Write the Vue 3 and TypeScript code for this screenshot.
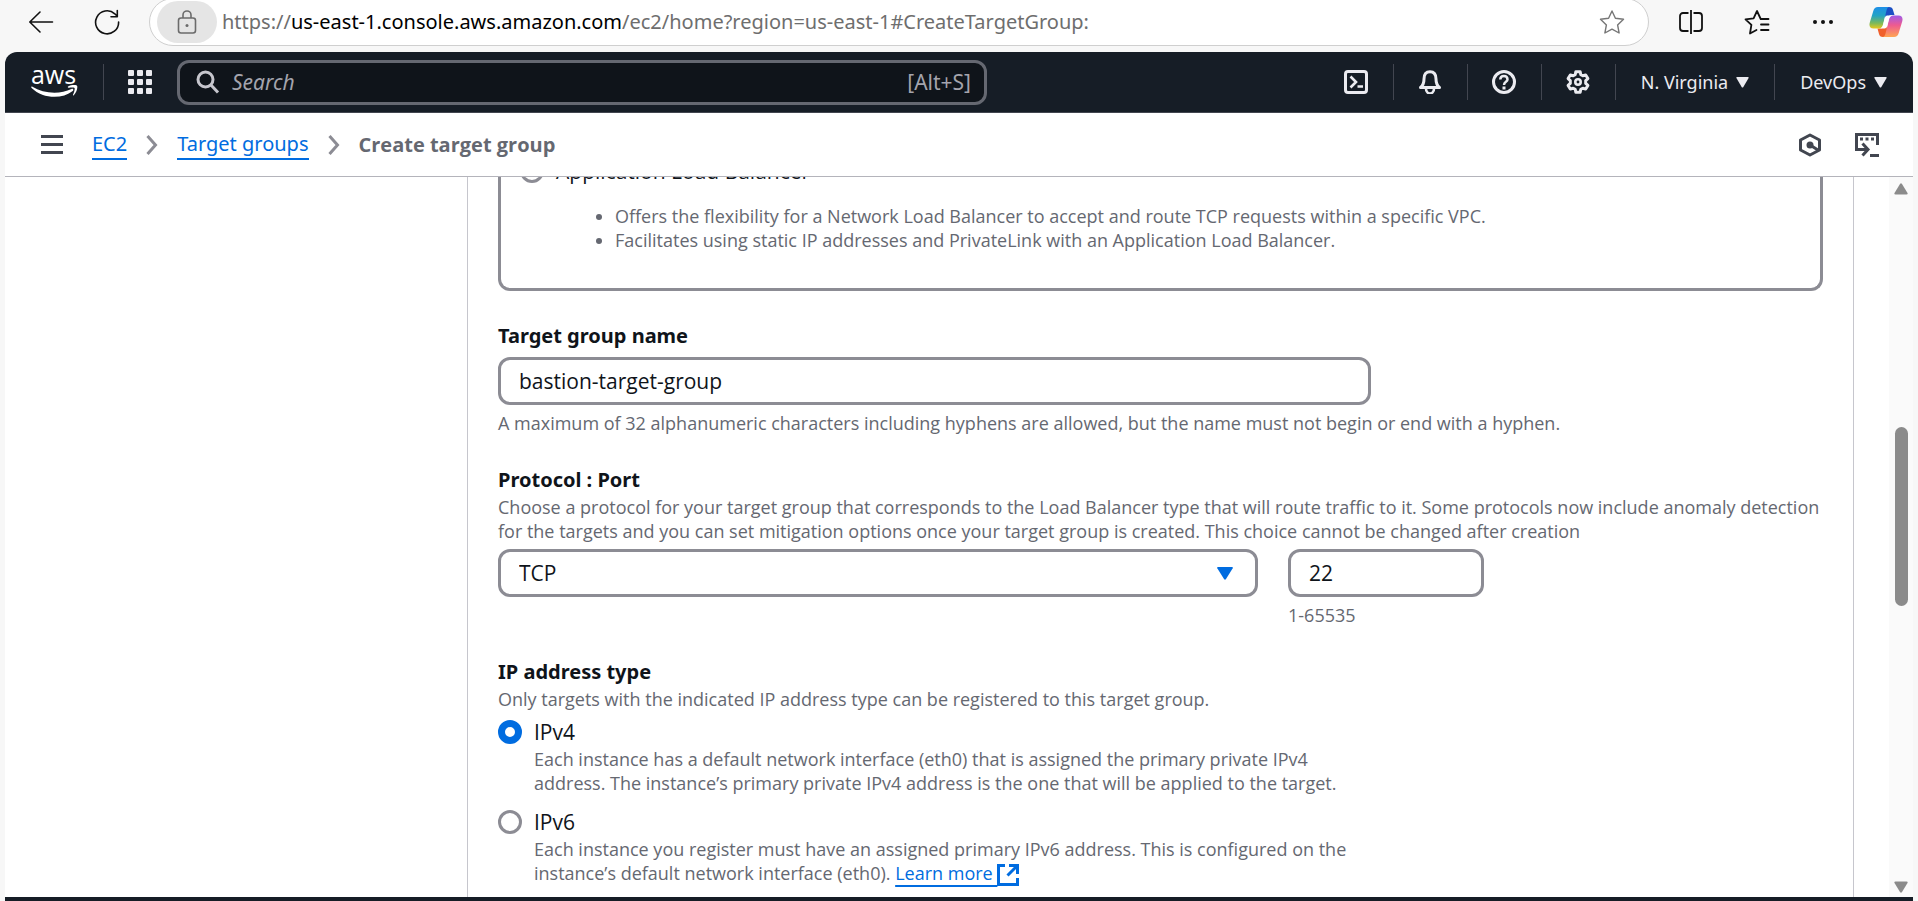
<script setup lang="ts">
import { ref } from 'vue'

interface IpOption {
  id: string
  label: string
  text: string
  link?: string
}

const groupName = ref('bastion-target-group')
const protocol = ref('TCP')
const port = ref('22')
const ipType = ref('ipv4')
const targetType = ref('')
const query = ref('')

const albPoints: string[] = [
  'Offers the flexibility for a Network Load Balancer to accept and route TCP requests within a specific VPC.',
  'Facilitates using static IP addresses and PrivateLink with an Application Load Balancer.',
]

const ipOptions: IpOption[] = [
  {
    id: 'ipv4',
    label: 'IPv4',
    text: 'Each instance has a default network interface (eth0) that is assigned the primary private IPv4 address. The instance’s primary private IPv4 address is the one that will be applied to the target.',
  },
  {
    id: 'ipv6',
    label: 'IPv6',
    text: 'Each instance you register must have an assigned primary IPv6 address. This is configured on the instance’s default network interface (eth0).',
    link: 'Learn more',
  },
]
</script>

<template>
  <div class="window">
    <div class="browser-bar">
      <button class="tool back" aria-label="Back">
        <svg width="26" height="26" viewBox="0 0 26 26" fill="none" stroke="#111" stroke-width="1.6" stroke-linecap="round" stroke-linejoin="round"><path d="M24.500 13H2M12 3 1.800 13 12 23" /></svg>
      </button>
      <button class="tool reload" aria-label="Reload">
        <svg width="26" height="26" viewBox="0 0 26 26" fill="none" stroke="#111" stroke-width="1.6" stroke-linecap="round" stroke-linejoin="round"><path d="M24.600 13A11.500 11.500 0 1 1 20.800 4.800L23 7M23.300 1.500V7.800H17" /></svg>
      </button>
      <div class="address">
        <button class="site-info" aria-label="Site information">
          <svg width="22" height="26" viewBox="0 0 22 26" fill="none" stroke="#6b6b6b" stroke-width="1.6"><rect x="2.500" y="9" width="17" height="15" rx="2.500" /><path d="M7 9V6a4 4 0 0 1 8 0v3" /><circle cx="11" cy="16.500" r="1.500" fill="#6b6b6b" stroke="none" /></svg>
        </button>
        <span class="url">https://<b>us-east-1.console.aws.amazon.com</b>/ec2/home?region=us-east-1#CreateTargetGroup:</span>
        <button class="tool" aria-label="Add to favorites">
          <svg width="26" height="26" viewBox="0 0 26 26" fill="none" stroke="#767676" stroke-width="1.4" stroke-linejoin="round"><path d="M13 2 16.400 9.300 24.500 10.300 18.600 15.900 20.100 24 13 20.100 5.900 24 7.400 15.900 1.500 10.300 9.600 9.300Z" /></svg>
        </button>
      </div>
      <div class="browser-tools">
        <button class="tool" aria-label="Split screen">
          <svg width="26" height="26" viewBox="0 0 26 26" fill="none" stroke="#111" stroke-width="1.8"><path d="M13 1v24M10.500 4H5a3 3 0 0 0-3 3v12a3 3 0 0 0 3 3h5.500M15.500 4H21a3 3 0 0 1 3 3v12a3 3 0 0 1-3 3h-5.500" /></svg>
        </button>
        <button class="tool" aria-label="Favorites">
          <svg width="26" height="26" viewBox="0 0 26 26" fill="none" stroke="#111" stroke-width="1.8" stroke-linejoin="round" stroke-linecap="round"><path d="M24.500 10H16.700L13 2 9.600 9.300 1.500 10.300 7.400 15.900 6 24.500 12.500 21M17 15.500h7.500M17 21h7.500" /></svg>
        </button>
        <button class="tool" aria-label="Settings and more">
          <svg width="26" height="26" viewBox="0 0 26 26" fill="#111"><circle cx="5" cy="13" r="2" /><circle cx="13" cy="13" r="2" /><circle cx="21" cy="13" r="2" /></svg>
        </button>
        <button class="tool copilot" aria-label="Copilot">
          <svg width="34" height="32" viewBox="0 0 34 32">
            <defs>
              <linearGradient id="cpA" x1="0" y1="0" x2="0" y2="1"><stop offset="0" stop-color="#1e8fe8" /><stop offset=".4" stop-color="#23a3c4" /><stop offset=".75" stop-color="#7cb95a" /><stop offset="1" stop-color="#e8c81c" /></linearGradient>
              <linearGradient id="cpB" x1="0" y1="0" x2="0" y2="1"><stop offset="0" stop-color="#a05be8" /><stop offset=".45" stop-color="#ee5a90" /><stop offset="1" stop-color="#ffa552" /></linearGradient>
            </defs>
            <path d="M15 1h5c2.500 0 3.500 1 4 3l1.500 5h-3c-2 0-3 1-3.500 3l-2 4Z" fill="#1b4fc4" />
            <path d="M19 31h-5c-2.500 0-3.500-1-4-3l-1.500-5.500h3c2 0 3-1 3.500-3l2-4Z" fill="#f0602c" />
            <path d="M9 1H20.500c-1.700 0-2.500 1.500-3 3.500L14 18.500c-.6 2.500-2 4-4.500 4H4.500C1 22.500-.2 20 .8 16.500L4.300 5C5 2.300 6.500 1 9 1Z" fill="url(#cpA)" />
            <path d="M25 31H13.500c1.700 0 2.500-1.500 3-3.500L20 13.500c.6-2.500 2-4 4.500-4h5c3.500 0 4.700 2.500 3.700 6L29.700 27c-.7 2.700-2.200 4-4.700 4Z" fill="url(#cpB)" />
            <path d="M18.200 9.500h5c-2 .6-2.900 2-3.400 4l-1.600 6.500c-.5 1.600-1.200 2.500-2.700 2.500h-4.200c1.600-.6 2.400-2 2.900-4l1.500-6c.4-1.700 1.200-2.700 2.500-3Z" fill="#fff" />
          </svg>
        </button>
      </div>
    </div>

    <div class="page">
      <header class="aws-nav">
        <a class="logo" href="#" aria-label="AWS home">
          <span class="logo-word">aws</span>
          <svg width="48" height="13" viewBox="0 0 48 13" fill="#fff"><path d="M1 1.500C13 9 29 9.500 40.500 4c1.500-.6 2.500 1 1.200 2C31 14.500 12 14 .6 3 0 2.200.2 1 1 1.500Z" /><path d="M37 1.500c3-2 8-2 9-.8s-.3 7-3.200 9.600c-.6.5-1 .1-.8-.5.800-2 2.200-5.800 1.500-6.700S39 2.700 37.500 2.800c-.7 0-.9-.7-.5-1.300Z" /></svg>
        </a>
        <button class="apps" aria-label="Services">
          <svg width="24" height="24" viewBox="0 0 24 24" fill="#ebebf0"><rect v-for="n in 9" :key="n" :x="((n - 1) % 3) * 9" :y="Math.floor((n - 1) / 3) * 9" width="6" height="6" rx="1" /></svg>
        </button>
        <label class="search">
          <svg width="24" height="24" viewBox="0 0 24 24" fill="none" stroke="#c6c6cd" stroke-width="3"><circle cx="9.500" cy="9.500" r="7.500" /><path d="m15 15 7 7.500" /></svg>
          <input v-model="query" type="text" placeholder="Search" aria-label="Search" />
          <span>[Alt+S]</span>
        </label>
        <nav class="nav-tools">
          <button class="nav-icon" aria-label="CloudShell">
            <svg width="24" height="24" viewBox="0 0 24 24" fill="none" stroke="#ebebf0" stroke-width="3"><rect x="1.500" y="1.500" width="21" height="21" rx="2.500" /><path d="m6.500 6.500 5.500 5.500-5.500 5.500M13.500 16.500H19" stroke-width="2.600" /></svg>
          </button>
          <button class="nav-icon" aria-label="Notifications">
            <svg width="24" height="24" viewBox="0 0 24 24" fill="none" stroke="#ebebf0" stroke-width="3" stroke-linejoin="round"><path d="M2.500 17.500c2-1.500 3.500-3.500 3.500-8.500 0-4.700 2-7.300 6-7.300S18 4.300 18 9c0 5 1.500 7 3.500 8.500Z" /><path d="M8 18.500a4 5 0 0 0 8 0" stroke-width="2.600" /></svg>
          </button>
          <button class="nav-icon" aria-label="Help">
            <svg width="24" height="24" viewBox="0 0 24 24" fill="none" stroke="#ebebf0" stroke-width="3"><circle cx="12" cy="12" r="10.500" /><path d="M8.300 9.500c0-4.700 7.200-4.700 7.200 0 0 2.500-3.500 2.300-3.500 5.500" stroke-width="2.500" /><path d="M12 16.500v3" /></svg>
          </button>
          <button class="nav-icon" aria-label="Settings">
            <svg width="24" height="24" viewBox="0 0 24 24" fill="none" stroke="#ebebf0" stroke-width="3" stroke-linejoin="round"><path d="M9.800 1.800h4.400l.6 2.900 2 1.100 2.900-.9 2.200 3.700-2.200 2v2.800l2.200 2-2.200 3.700-2.900-.9-2 1.100-.6 2.900H9.800l-.6-2.900-2-1.100-2.900.9-2.200-3.700 2.200-2v-2.800l-2.200-2 2.200-3.700 2.900.9 2-1.100Z" /><circle cx="12" cy="12" r="2.700" stroke-width="2.600" /></svg>
          </button>
          <button class="nav-text">N. Virginia <svg width="13" height="11" viewBox="0 0 13 11" fill="#ebebf0"><path d="M1 0h11q1 0 .6 1L7.200 10.200q-.7.800-1.400 0L.4 1Q0 0 1 0Z" /></svg></button>
          <button class="nav-text">DevOps <svg width="13" height="11" viewBox="0 0 13 11" fill="#ebebf0"><path d="M1 0h11q1 0 .6 1L7.200 10.200q-.7.800-1.400 0L.4 1Q0 0 1 0Z" /></svg></button>
        </nav>
      </header>

      <div class="crumb-bar">
        <button class="menu" aria-label="Open navigation">
          <svg width="22" height="20" viewBox="0 0 22 20" fill="#424650"><path d="M0 0h22v3H0zM0 8h22v3H0zM0 16h22v3H0z" /></svg>
        </button>
        <nav class="crumbs" aria-label="Breadcrumbs">
          <a href="#">EC2</a>
          <svg width="12" height="20" viewBox="0 0 12 20" fill="none" stroke="#8c8c94" stroke-width="3"><path d="m1.500 1 8 9-8 9" /></svg>
          <a href="#">Target groups</a>
          <svg width="12" height="20" viewBox="0 0 12 20" fill="none" stroke="#8c8c94" stroke-width="3"><path d="m1.500 1 8 9-8 9" /></svg>
          <strong>Create target group</strong>
        </nav>
        <button class="side-tool" aria-label="Info">
          <svg width="24" height="24" viewBox="0 0 24 24" fill="none" stroke="#424650" stroke-width="3"><path d="M12 2 21.500 7v10L12 22 2.500 17V7Z" stroke-linejoin="round" /><circle cx="12" cy="12" r="3.500" fill="#424650" stroke="none" /><path d="m12 12 8 5" /></svg>
        </button>
        <button class="side-tool" aria-label="Console tools">
          <svg width="24" height="24" viewBox="0 0 24 24" fill="none" stroke="#424650" stroke-width="3"><path d="M22.500 12V1.500h-21v15H12" /><path d="M7.500 10.500 13 16.500l-5.500 6M15 22.500h9" /><path d="M5 6h3M10.500 6h3M16 6h3" /></svg>
        </button>
      </div>

      <div class="content">
        <main class="panel">
          <section class="type-card">
            <label class="radio-row"><input v-model="targetType" type="radio" name="target-type" value="alb" /><span>Application Load Balancer</span></label>
            <ul>
              <li v-for="point in albPoints" :key="point">{{ point }}</li>
            </ul>
          </section>

          <section class="field">
            <label class="title" for="group-name">Target group name</label>
            <input id="group-name" v-model="groupName" class="box name-box" type="text" />
            <p class="hint">A maximum of 32 alphanumeric characters including hyphens are allowed, but the name must not begin or end with a hyphen.</p>
          </section>

          <section class="field">
            <label class="title" for="protocol">Protocol : Port</label>
            <p class="hint lead">Choose a protocol for your target group that corresponds to the Load Balancer type that will route traffic to it. Some protocols now include anomaly detection for the targets and you can set mitigation options once your target group is created. This choice cannot be changed after creation</p>
            <div class="pair">
              <div class="select-wrap">
                <select id="protocol" v-model="protocol" class="box"><option>TCP</option></select>
                <svg width="16" height="13" viewBox="0 0 16 13" fill="#006ce0"><path d="M1 0h14q1.300 0 .7 1.200L9 12q-1 1.500-2 0L.3 1.200Q-.3 0 1 0Z" /></svg>
              </div>
              <div class="port">
                <input v-model="port" class="box" type="text" aria-label="Port" />
                <p class="hint">1-65535</p>
              </div>
            </div>
          </section>

          <section class="field" role="radiogroup" aria-labelledby="ip-title">
            <h2 id="ip-title" class="title">IP address type</h2>
            <p class="hint lead">Only targets with the indicated IP address type can be registered to this target group.</p>
            <div v-for="option in ipOptions" :key="option.id" class="option">
              <label class="radio-row"><input v-model="ipType" type="radio" name="ip-type" :value="option.id" /><span>{{ option.label }}</span></label>
              <p class="hint">{{ option.text }}<template v-if="option.link">{{ ' ' }}<a class="more" href="#">{{ option.link }} <svg width="22" height="22" viewBox="0 0 22 22" fill="none" stroke="#006ce0" stroke-width="3"><path d="M8 1.500H1.500v19h19V14M12 1.500h8.500V10M20 2l-9.500 9.500" /></svg></a></template></p>
            </div>
          </section>
        </main>
        <div class="scrollbar" aria-hidden="true">
          <svg width="14" height="12" viewBox="0 0 14 12" fill="#8b8b8b"><path d="M6 1q1-1.500 2 0l5.500 9q.6 1.500-1 1.500h-11q-1.600 0-1-1.500Z" /></svg>
          <div class="track"><div class="thumb"></div></div>
          <svg width="14" height="12" viewBox="0 0 14 12" fill="#8b8b8b"><path d="M6 11q1 1.500 2 0l5.500-9q.6-1.500-1-1.500h-11q-1.600 0-1 1.500Z" /></svg>
        </div>
      </div>
      <footer class="foot"></footer>
    </div>
  </div>
</template>

<style>
body {
  margin: 0;
  overflow: hidden;
}
</style>

<style scoped>
* {
  box-sizing: border-box;
}
.window {
  height: 100vh;
  display: flex;
  flex-direction: column;
  overflow: hidden;
  background: #f7f7f7;
  font-family: 'Noto Sans', 'Open Sans', sans-serif;
  font-size: 20px;
  line-height: 30px;
  color: #0f141a;
}
button {
  border: 0;
  padding: 0;
  background: none;
  font: inherit;
  color: inherit;
}
svg {
  display: block;
  flex: none;
}
p,
h2,
ul {
  margin: 0;
}

.browser-bar {
  flex: none;
  display: flex;
  align-items: center;
  height: 52px;
  padding: 0 15px 8px 28px;
}
.reload {
  margin: 0 29px 0 40px;
}
.address {
  flex: 1;
  display: flex;
  align-items: center;
  height: 48px;
  padding: 0 23px 0 7px;
  background: #fff;
  border: 1px solid #cfcfcf;
  border-radius: 24px;
}
.site-info {
  display: flex;
  align-items: center;
  justify-content: center;
  width: 60px;
  height: 42px;
  border-radius: 21px;
  background: #e5e5e5;
}
.url {
  flex: 1;
  margin-left: 5px;
  color: #6e6e6e;
  white-space: nowrap;
}
.url b {
  font-weight: 400;
  color: #000;
}
.browser-tools {
  display: flex;
  align-items: center;
  gap: 40px;
  margin-left: 29px;
}
.copilot {
  margin-left: -7px;
}

.page {
  flex: 1;
  min-height: 0;
  display: flex;
  flex-direction: column;
  margin: 0 5px;
  border-radius: 12px 12px 0 0;
  overflow: hidden;
  background: #fff;
}
.aws-nav {
  flex: none;
  display: flex;
  align-items: center;
  height: 61px;
  border-bottom: 1px solid #424650;
  background: #161d26;
  color: #ebebf0;
}
.logo {
  flex: none;
  display: flex;
  flex-direction: column;
  align-items: center;
  width: 99px;
  height: 36px;
  padding: 0 19px 0 18px;
  border-right: 1px solid #424650;
  color: #fff;
  text-decoration: none;
}
.logo svg {
  margin-left: 2px;
}
.logo-word {
  font: 500 25px/21px 'Open Sans', sans-serif;
}
.apps {
  margin: 0 25px 0 24px;
}
.search {
  display: flex;
  align-items: center;
  width: 810px;
  height: 45px;
  padding: 0 13px 0 16px;
  border: 3px solid #656871;
  border-radius: 12px;
  background: #0f141a;
  font-size: 21px;
  color: #a4a4ad;
}
.search input {
  flex: 1;
  min-width: 0;
  padding: 0;
  margin-left: 12px;
  border: 0;
  outline: 0;
  background: none;
  font: inherit;
  color: inherit;
}
.search input::placeholder {
  font-style: italic;
  color: #a4a4ad;
  opacity: 1;
}
.nav-tools {
  display: flex;
  align-items: center;
  margin-left: auto;
  margin-right: 1px;
  font-size: 18px;
}
.nav-icon,
.nav-text {
  display: flex;
  align-items: center;
  justify-content: center;
  height: 36px;
  white-space: nowrap;
}
.nav-icon {
  width: 74px;
}
.nav-tools > * + * {
  border-left: 1px solid #424650;
}
.nav-text {
  gap: 8px;
  padding: 0 25px;
}

.crumb-bar {
  flex: none;
  display: flex;
  align-items: center;
  height: 64px;
  padding: 0 34px 0 36px;
  border-bottom: 1px solid #b4b4bb;
}
.crumbs {
  flex: 1;
  display: flex;
  align-items: center;
  gap: 19px;
  margin-left: 29px;
}
.crumbs a {
  color: #006ce0;
  text-decoration: none;
  border-bottom: 2px solid #006ce0;
  line-height: 28px;
}
.crumbs strong {
  font-family: 'Open Sans', sans-serif;
  color: #656871;
}
.side-tool {
  margin-left: 33px;
}

.content {
  flex: 1;
  min-height: 0;
  display: flex;
  overflow: hidden;
}
.panel {
  flex: 1;
  margin-left: 462px;
  margin-right: 35px;
  padding: 0 30px;
  border: solid #c6c6cd;
  border-width: 0 1px;
}
.type-card {
  margin-top: -36px;
  padding: 15px 19px 36px;
  border: 3px solid #8c8c94;
  border-top: 0;
  border-radius: 0 0 12px 12px;
}
.type-card ul {
  padding: 18px 0 0 95px;
  font-family: 'Open Sans', sans-serif;
  font-size: 18px;
  line-height: 24px;
  color: #656871;
}
.radio-row {
  display: flex;
  align-items: center;
  gap: 12px;
  font-family: 'Open Sans', sans-serif;
  font-size: 21px;
}
.radio-row input {
  appearance: none;
  flex: none;
  width: 24px;
  height: 24px;
  margin: 0;
  border: 3px solid #8c8c94;
  border-radius: 50%;
  background: #fff;
}
.radio-row input:checked {
  border: 7px solid #006ce0;
}
.field {
  margin-top: 30px;
}
.title {
  display: block;
  font-size: 20px;
  font-weight: 700;
  line-height: 30px;
}
.hint {
  font-family: 'Open Sans', sans-serif;
  font-size: 18px;
  line-height: 24px;
  color: #656871;
}
.box {
  appearance: none;
  display: block;
  width: 100%;
  height: 48px;
  padding: 0 18px;
  border: 3px solid #8c8c94;
  border-radius: 12px;
  background: #fff;
  font-family: 'Open Sans', sans-serif;
  font-size: 21px;
  color: #0f141a;
}
.name-box {
  width: calc(66% - 2px);
  margin: 6px 0;
}
.lead {
  margin-bottom: 6px;
}
.pair {
  display: flex;
  align-items: flex-start;
  gap: 30px;
}
.select-wrap {
  display: grid;
  align-items: center;
  width: 760px;
}
.select-wrap > * {
  grid-area: 1 / 1;
}
.select-wrap svg {
  justify-self: end;
  margin-right: 25px;
  pointer-events: none;
}
.port {
  width: 196px;
}
.port .hint {
  margin-top: 6px;
}
.option + .option {
  margin-top: 12px;
}
.option .hint {
  width: 820px;
  margin-left: 36px;
}
.more {
  color: #006ce0;
  text-decoration: underline;
  text-decoration-thickness: 2px;
  text-underline-offset: 5px;
}
.more svg {
  display: inline-block;
  vertical-align: middle;
}

.scrollbar {
  display: flex;
  flex-direction: column;
  align-items: center;
  justify-content: space-between;
  width: 24px;
  padding: 6px 0 4px;
  background: #fafafa;
}
.track {
  flex: 1;
  padding-top: 232px;
}
.thumb {
  width: 13px;
  height: 179px;
  border-radius: 7px;
  background: #8b8b8b;
}
.foot {
  flex: none;
  height: 4px;
  background: #161d26;
}
</style>
